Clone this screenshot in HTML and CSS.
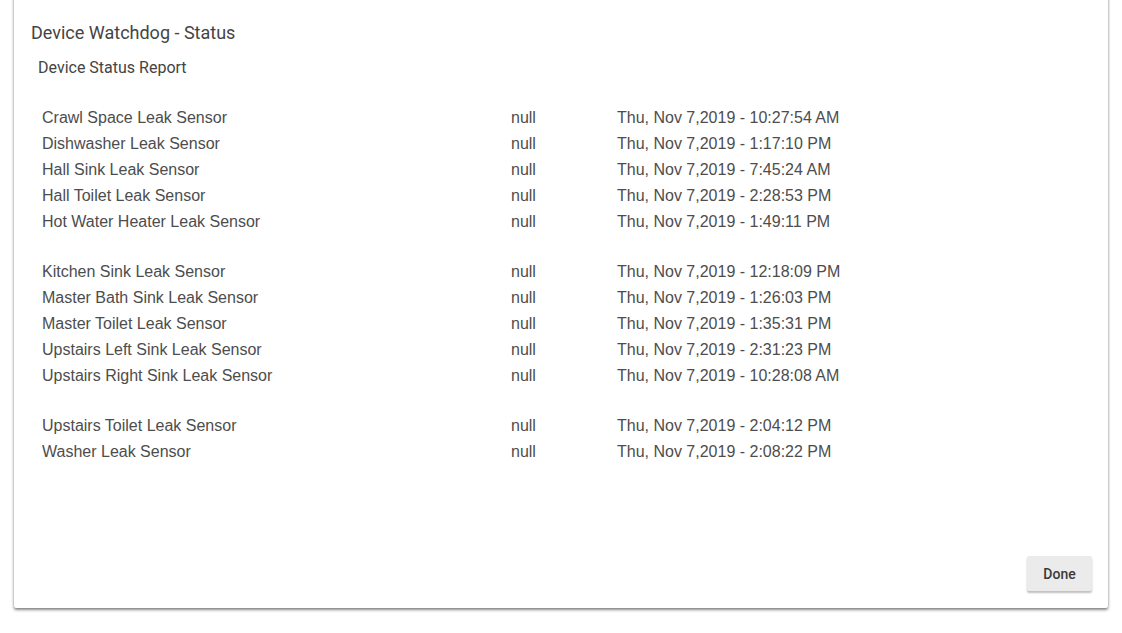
FILE: index.html
```html
<!DOCTYPE html>
<html>
<head>
<meta charset="utf-8">
<link rel="stylesheet" href="styles.css">
</head>
<body>
<div class="card">
  <h1 class="title">Device Watchdog - Status</h1>
  <div class="subtitle">Device Status Report</div>
  <div class="report">
    <div class="group">
      <div class="row"><span>Crawl Space Leak Sensor</span><span>null</span><span>Thu, Nov 7,2019 - 10:27:54 AM</span></div>
      <div class="row"><span>Dishwasher Leak Sensor</span><span>null</span><span>Thu, Nov 7,2019 - 1:17:10 PM</span></div>
      <div class="row"><span>Hall Sink Leak Sensor</span><span>null</span><span>Thu, Nov 7,2019 - 7:45:24 AM</span></div>
      <div class="row"><span>Hall Toilet Leak Sensor</span><span>null</span><span>Thu, Nov 7,2019 - 2:28:53 PM</span></div>
      <div class="row"><span>Hot Water Heater Leak Sensor</span><span>null</span><span>Thu, Nov 7,2019 - 1:49:11 PM</span></div>
    </div>
    <div class="group">
      <div class="row"><span>Kitchen Sink Leak Sensor</span><span>null</span><span>Thu, Nov 7,2019 - 12:18:09 PM</span></div>
      <div class="row"><span>Master Bath Sink Leak Sensor</span><span>null</span><span>Thu, Nov 7,2019 - 1:26:03 PM</span></div>
      <div class="row"><span>Master Toilet Leak Sensor</span><span>null</span><span>Thu, Nov 7,2019 - 1:35:31 PM</span></div>
      <div class="row"><span>Upstairs Left Sink Leak Sensor</span><span>null</span><span>Thu, Nov 7,2019 - 2:31:23 PM</span></div>
      <div class="row"><span>Upstairs Right Sink Leak Sensor</span><span>null</span><span>Thu, Nov 7,2019 - 10:28:08 AM</span></div>
    </div>
    <div class="group">
      <div class="row"><span>Upstairs Toilet Leak Sensor</span><span>null</span><span>Thu, Nov 7,2019 - 2:04:12 PM</span></div>
      <div class="row"><span>Washer Leak Sensor</span><span>null</span><span>Thu, Nov 7,2019 - 2:08:22 PM</span></div>
    </div>
  </div>
  <div class="actions"><button class="btn">Done</button></div>
</div>
</body>
</html>
```
FILE: styles.css
```css
html, body {
  margin: 0;
  padding: 0;
  background: #ffffff;
}
body {
  padding: 0 14px 25px 14px;
  overflow: hidden;
}
.card {
  margin-top: -10px;
  height: 618px;
  box-sizing: border-box;
  background: #fff;
  box-shadow: 0 2px 3px rgba(0,0,0,0.45), 0 0 3px rgba(0,0,0,0.16);
  border-radius: 2px;
  padding: 32px 16px 0 16px;
  display: flex;
  flex-direction: column;
  font-family: Roboto, "Liberation Sans", sans-serif;
  color: #444;
}
.title {
  margin: 0;
  font-size: 18px;
  font-weight: 400;
  line-height: 22px;
  color: #444;
  padding-left: 1px;
}
.subtitle {
  margin-top: 14px;
  padding-left: 8px;
  font-size: 16px;
  line-height: 20px;
  color: #444;
}
.report {
  margin-top: 27px;
  padding-left: 12px;
  font-family: "Liberation Sans", Arial, sans-serif;
  font-size: 16px;
  color: #4d4d4d;
}
.group + .group {
  margin-top: 24px;
}
.row {
  display: grid;
  grid-template-columns: 469px 106px auto;
  height: 26px;
  line-height: 26px;
}
.actions {
  margin-top: auto;
  display: flex;
  justify-content: flex-end;
  padding: 0 0 17px 0;
}
.btn {
  font-family: Roboto, "Liberation Sans", sans-serif;
  font-size: 14px;
  font-weight: 500;
  color: #3a3a3a;
  background: #ebebeb;
  border: none;
  border-radius: 2px;
  width: 65px;
  height: 35px;
  box-shadow: 0 2px 2px rgba(0,0,0,0.25);
  padding: 0;
  margin-right: 0;
}
```
